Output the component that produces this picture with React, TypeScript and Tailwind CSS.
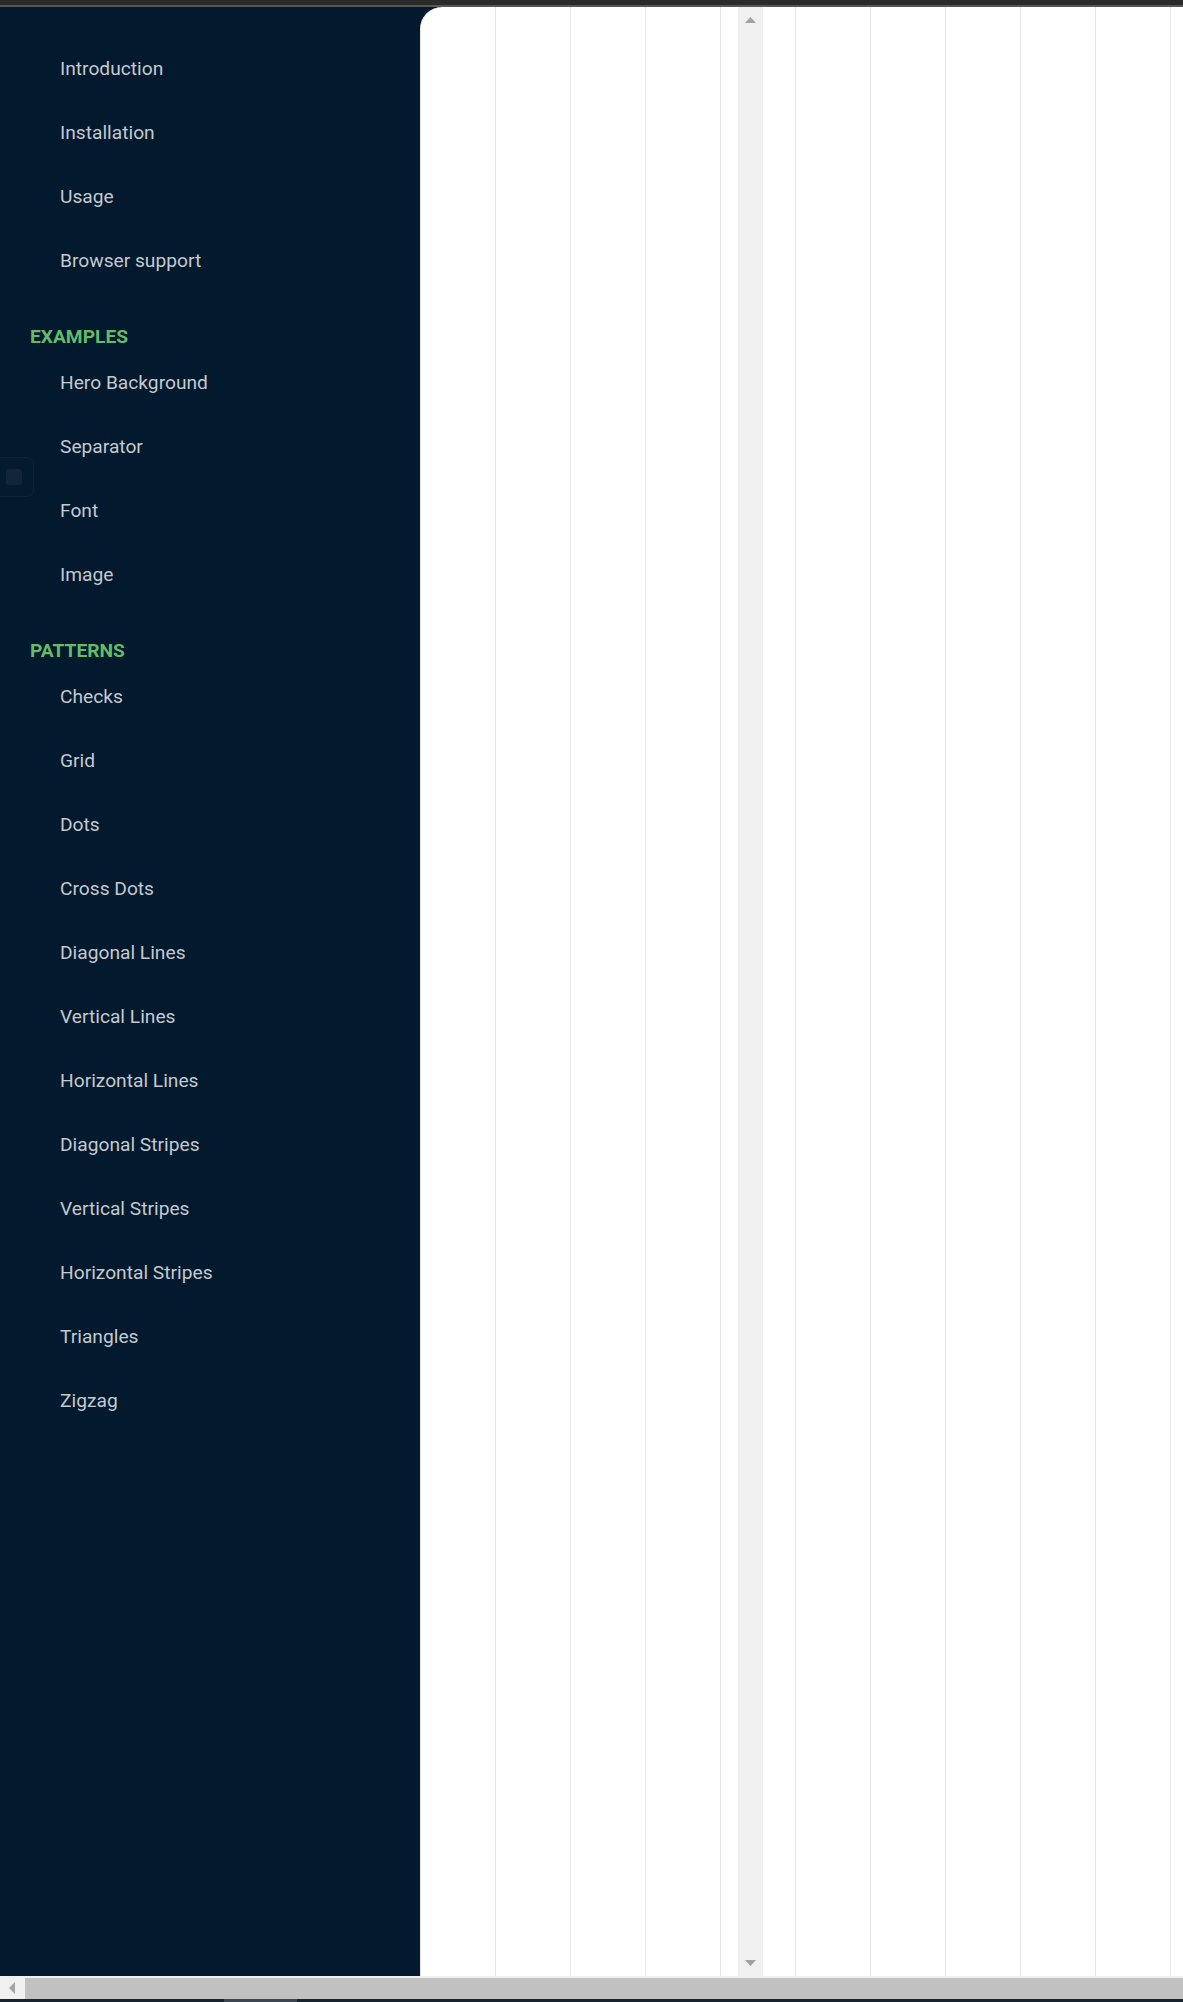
const gettingStarted = ["Introduction", "Installation", "Usage", "Browser support"];
const examples = ["Hero Background", "Separator", "Font", "Image"];
const patterns = [
  "Checks",
  "Grid",
  "Dots",
  "Cross Dots",
  "Diagonal Lines",
  "Vertical Lines",
  "Horizontal Lines",
  "Diagonal Stripes",
  "Vertical Stripes",
  "Horizontal Stripes",
  "Triangles",
  "Zigzag",
];

function NavItem({ label }: { label: string }) {
  return (
    <div className="flex h-[64px] items-center pl-[60px] text-[19.2px] text-[#c3c9d1]">
      {label}
    </div>
  );
}

function Heading({ label }: { label: string }) {
  return (
    <div className="mt-[30px] flex h-[28px] items-center pl-[30px] text-[19.2px] font-bold text-[#66bb6a]">
      {label}
    </div>
  );
}

export default function App() {
  return (
    <div className="flex h-[2002px] w-[1183px] flex-col overflow-hidden bg-[#03192d] font-['Roboto',sans-serif]">
      <div className="h-[5px] shrink-0 bg-[#2b2b2b]" />
      <div className="h-[2px] shrink-0 bg-[#575757]" />
      <div className="flex h-[1969px] shrink-0">
        <aside className="relative w-[420px] shrink-0 bg-[#03192d] pt-[30px]">
          {gettingStarted.map((l) => (
            <NavItem key={l} label={l} />
          ))}
          <Heading label="EXAMPLES" />
          {examples.map((l) => (
            <NavItem key={l} label={l} />
          ))}
          <Heading label="PATTERNS" />
          {patterns.map((l) => (
            <NavItem key={l} label={l} />
          ))}
          <div className="absolute left-0 top-[450px] flex h-[40px] w-[34px] items-center rounded-r-[7px] border border-l-0 border-[#0f2236] bg-[#041b2f] pl-[6px]">
            <div className="h-[16px] w-[16px] rounded-[3px] bg-[#12253a]" />
          </div>
        </aside>
        <main className="relative flex-1 rounded-tl-[22px] border-l border-[#e3e5e8] bg-white bg-[repeating-linear-gradient(to_right,transparent_0px,transparent_74px,#e4e6e9_74px,#e4e6e9_75px)]">
          <div className="absolute bottom-0 left-[317px] top-0 flex w-[25px] flex-col items-center justify-between bg-[#f0f0f0] pb-[10px] pt-[10px]">
            <svg width="11" height="6" viewBox="0 0 11 6">
              <polygon points="5.5,0 11,6 0,6" fill="#a3a3a3" />
            </svg>
            <svg width="11" height="6" viewBox="0 0 11 6">
              <polygon points="0,0 11,0 5.5,6" fill="#a3a3a3" />
            </svg>
          </div>
        </main>
      </div>
      <div className="flex h-[23px] shrink-0 bg-[#f0f0f0]">
        <div className="flex w-[25px] items-center justify-center pr-[2px]">
          <svg width="6" height="12" viewBox="0 0 6 12">
            <polygon points="6,0 6,12 0,6" fill="#a3a3a3" />
          </svg>
        </div>
        <div className="mt-[2px] flex-1 bg-[#c1c1c1]" />
      </div>
      <div className="flex h-[3px] shrink-0 bg-[#17232e]">
        <div className="w-[224px]" />
        <div className="w-[73px] bg-[#3c4651]" />
      </div>
    </div>
  );
}
